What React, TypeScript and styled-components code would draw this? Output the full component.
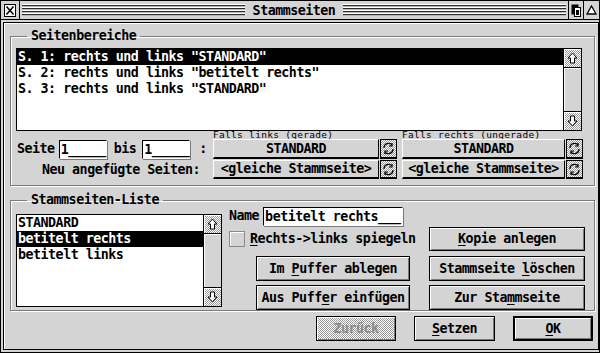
import React from 'react';
import styled, { createGlobalStyle } from 'styled-components';

const GlobalStyle = createGlobalStyle`
  html, body { margin: 0; padding: 0; background: #d4d4d4; }
  * { box-sizing: border-box; }
`;

const FONT = `"DejaVu Sans Mono", "Liberation Mono", monospace`;
const GRAY = '#d4d4d4';
const DITHER = `repeating-conic-gradient(#ffffff 0 25%, #9a9a9a 0 50%) 0 0 / 2px 2px`;

const Window = styled.div`
  width: 600px;
  height: 353px;
  border: 1px solid #000;
  display: flex;
  flex-direction: column;
  background: ${GRAY};
  font-family: ${FONT};
  font-weight: bold;
  font-size: 13.33px;
  letter-spacing: -0.5px;
  line-height: 16px;
  color: #000;
`;

const TitleBar = styled.div`
  height: 19px;
  flex: none;
  display: flex;
  border-bottom: 1px solid #000;
`;

const TitleBox = styled.div<{ $w: number }>`
  width: ${p => p.$w}px;
  flex: none;
  display: flex;
  align-items: center;
  justify-content: center;
  border-right: 1px solid #000;
  &:last-child { border-right: none; }
`;

const Stripes = styled.div`
  flex: 1;
  display: flex;
  align-items: center;
  justify-content: center;
  border-right: 1px solid #000;
  background: ${GRAY};
  position: relative;
  &::before {
    content: '';
    position: absolute;
    left: 2px; right: 2px; top: 3px; bottom: 3px;
    background: repeating-linear-gradient(to bottom, #ffffff 0 1px, #2a2a2a 1px 2px, #b8b8b8 2px 3px);
  }
`;

const TitleText = styled.span`
  position: relative;
  z-index: 1;
  background: ${GRAY};
  padding: 0 8px;
  line-height: 17px;
`;

const Body = styled.div`
  flex: 1;
  padding: 2px;
  display: flex;
`;

const Inner = styled.div`
  flex: 1;
  border: 1px solid #000;
  box-shadow: inset 1px 1px 0 #fff;
  padding: 5px 3px 0 6px;
  display: flex;
  flex-direction: column;
`;

const Group = styled.fieldset<{ $pb: number; $pt: number }>`
  margin: 0;
  border: 1px solid #7a7a7a;
  box-shadow: inset 1px 1px 0 #fff, 1px 1px 0 #fff;
  padding: ${p => p.$pt}px 9px ${p => p.$pb}px 5px;
  min-width: 0;
  & + & { margin-top: 6px; }
`;

const Legend = styled.legend`
  margin-left: 11px;
  padding: 0 4px;
  line-height: 16px;
`;

const ListBox = styled.div<{ $w: number; $h: number }>`
  width: ${p => p.$w}px;
  height: ${p => p.$h}px;
  border: 1px solid #000;
  background: #fff;
  display: flex;
  flex: none;
`;

const ListRows = styled.div`
  flex: 1;
  overflow: hidden;
`;

const ListRow = styled.div<{ $sel?: boolean }>`
  height: 16px;
  line-height: 16px;
  padding-left: 1px;
  white-space: pre;
  background: ${p => (p.$sel ? '#000' : 'transparent')};
  color: ${p => (p.$sel ? '#fff' : '#000')};
`;

const ScrollBar = styled.div`
  width: 18px;
  flex: none;
  border-left: 1px solid #000;
  display: flex;
  flex-direction: column;
  background: ${GRAY};
`;

const ScrollArrow = styled.div`
  height: 18px;
  flex: none;
  display: flex;
  align-items: center;
  justify-content: center;
  background: ${DITHER};
  box-shadow: inset 1px 1px 0 #fff;
`;

const ScrollTrack = styled.div`
  flex: 1;
  border-top: 1px solid #000;
  border-bottom: 1px solid #000;
  background: ${GRAY};
  box-shadow: inset 1px 1px 0 #fff;
`;

const PageGrid = styled.div`
  display: grid;
  grid-template-columns: 197px 184px 186px;
  grid-template-rows: 7px 20px 19px;
  row-gap: 1px;
`;

const Caption = styled.div<{ $ml?: number }>`
  font-size: 9.5px;
  font-weight: normal;
  letter-spacing: 0.3px;
  line-height: 7px;
  margin-left: ${p => p.$ml ?? 0}px;
  white-space: pre;
`;

const RangeRow = styled.div`
  display: flex;
  align-items: center;
  padding-left: 1px;
`;

const Field = styled.div<{ $w: number }>`
  width: ${p => p.$w}px;
  height: 19px;
  background: #fff;
  border: 1px solid #000;
  border-right-color: #fff;
  border-bottom-color: #fff;
  box-shadow: 1px 1px 0 #7a7a7a;
  line-height: 17px;
  padding-left: 1px;
  white-space: pre;
`;

const Label = styled.span<{ $ml?: number }>`
  margin-left: ${p => p.$ml ?? 0}px;
  white-space: pre;
`;

const RightLabel = styled.div`
  text-align: right;
  padding-right: 13px;
  line-height: 19px;
`;

const Popup = styled.div<{ $ml?: number }>`
  display: flex;
  height: 100%;
  margin-left: ${p => p.$ml ?? 0}px;
`;

const PopupButton = styled.div`
  flex: 1;
  display: flex;
  align-items: center;
  justify-content: center;
  border-top: 1px solid #fff;
  border-left: 1px solid #fff;
  border-bottom: 2px solid #000;
  border-right: 1px solid #000;
  background: ${GRAY};
  white-space: pre;
`;

const CycleBox = styled.div`
  width: 17px;
  margin-left: 1px;
  flex: none;
  display: flex;
  align-items: center;
  justify-content: center;
  border: 1px solid #000;
  border-bottom-width: 2px;
  background: ${DITHER};
`;

const MasterArea = styled.div`
  display: flex;
  align-items: flex-start;
`;

const RightPane = styled.div`
  margin-left: 7px;
  margin-top: -8px;
  width: 356px;
  display: flex;
  flex-direction: column;
`;

const Row = styled.div<{ $mt?: number; $h: number }>`
  display: flex;
  align-items: center;
  height: ${p => p.$h}px;
  margin-top: ${p => p.$mt ?? 0}px;
`;

const CheckBox = styled.div`
  width: 16px;
  height: 16px;
  border: 1px solid #8a8a8a;
  box-shadow: inset 1px 1px 0 #fff;
  background: ${GRAY};
  margin-right: 5px;
`;

const Button = styled.div<{ $w: number; $h?: number; $ml?: number; $default?: boolean; $disabled?: boolean }>`
  width: ${p => p.$w}px;
  height: ${p => p.$h ?? 25}px;
  margin-left: ${p => p.$ml ?? 0}px;
  flex: none;
  display: flex;
  align-items: center;
  justify-content: center;
  border: ${p => (p.$default ? 2 : 1)}px solid #000;
  box-shadow: inset 1px 1px 0 #fff, inset -1px -1px 0 #7a7a7a;
  background: ${p => (p.$disabled ? DITHER : GRAY)};
  color: ${p => (p.$disabled ? '#8a8a8a' : '#000')};
  white-space: pre;
`;

const Spacer = styled.div`
  flex: 1;
`;

const BottomRow = styled.div`
  display: flex;
  justify-content: flex-end;
  gap: 18px;
  margin-top: 5px;
  margin-right: 2px;
`;

const U = styled.span`
  text-decoration: underline;
  text-underline-offset: 2px;
  text-decoration-thickness: 1px;
`;

const UpArrow = ({ down }: { down?: boolean }) => (
  <svg width="11" height="12" viewBox="0 0 11 12" style={down ? { transform: 'rotate(180deg)' } : undefined}>
    <path d="M5.5 1 L10 6 H7.5 V11 H3.5 V6 H1 Z" fill="#fff" stroke="#000" strokeWidth="1" />
  </svg>
);

const CycleIcon = () => (
  <svg width="13" height="13" viewBox="0 0 13 13" fill="none" stroke="#000" strokeWidth="1.2">
    <path d="M2 6 A4.5 4.5 0 0 1 10 3" />
    <path d="M10 1 V4 H7" />
    <path d="M11 7 A4.5 4.5 0 0 1 3 10" />
    <path d="M3 12 V9 H6" />
  </svg>
);

const CloseIcon = () => (
  <svg width="12" height="13" viewBox="0 0 12 13">
    <rect x="0.5" y="0.5" width="11" height="12" fill="#fff" stroke="#000" />
    <path d="M2.5 2.5 L9.5 10.5 M9.5 2.5 L2.5 10.5" stroke="#000" strokeWidth="1.5" />
  </svg>
);

const IconifyIcon = () => (
  <svg width="10" height="13" viewBox="0 0 10 13">
    <rect x="0.5" y="0.5" width="7" height="10" fill="#000" />
    <rect x="3.5" y="3.5" width="6" height="9" fill="#fff" stroke="#000" />
    <rect x="5" y="6" width="3" height="5" fill="#000" />
  </svg>
);

const FullIcon = () => (
  <svg width="11" height="10" viewBox="0 0 11 10">
    <path d="M5.5 1 L10 9 H1 Z" fill="#fff" stroke="#000" strokeWidth="1.3" />
  </svg>
);

const pages = [
  'S. 1: rechts und links "STANDARD"',
  'S. 2: rechts und links "betitelt rechts"',
  'S. 3: rechts und links "STANDARD"',
];

const masters = ['STANDARD', 'betitelt rechts', 'betitelt links'];

const Scroll = () => (
  <ScrollBar>
    <ScrollArrow><UpArrow /></ScrollArrow>
    <ScrollTrack />
    <ScrollArrow><UpArrow down /></ScrollArrow>
  </ScrollBar>
);

const CyclePopup = ({ label, ml }: { label: string; ml?: number }) => (
  <Popup $ml={ml}>
    <PopupButton>{label}</PopupButton>
    <CycleBox><CycleIcon /></CycleBox>
  </Popup>
);

export default function App() {
  return (
    <>
      <GlobalStyle />
      <Window>
        <TitleBar>
          <TitleBox $w={19}><CloseIcon /></TitleBox>
          <Stripes><TitleText>Stammseiten</TitleText></Stripes>
          <TitleBox $w={15}><IconifyIcon /></TitleBox>
          <TitleBox $w={15}><FullIcon /></TitleBox>
        </TitleBar>
        <Body>
          <Inner>
            <Group $pt={4} $pb={6}>
              <Legend>Seitenbereiche</Legend>
              <ListBox $w={566} $h={83}>
                <ListRows>
                  {pages.map((p, i) => (
                    <ListRow key={p + i} $sel={i === 0}>{p}</ListRow>
                  ))}
                </ListRows>
                <Scroll />
              </ListBox>
              <PageGrid>
                <div />
                <Caption>Falls links (gerade)</Caption>
                <Caption $ml={5}>Falls rechts (ungerade)</Caption>
                <RangeRow>
                  <Label>Seite</Label>
                  <Label $ml={4}><Field $w={48}>1_____</Field></Label>
                  <Label $ml={7}>bis</Label>
                  <Label $ml={6}><Field $w={48}>1_____</Field></Label>
                  <Label $ml={9}>:</Label>
                </RangeRow>
                <CyclePopup label="STANDARD" />
                <CyclePopup label="STANDARD" ml={5} />
                <RightLabel>Neu angefügte Seiten:</RightLabel>
                <CyclePopup label="<gleiche Stammseite>" />
                <CyclePopup label="<gleiche Stammseite>" ml={5} />
              </PageGrid>
            </Group>
            <Group $pt={6} $pb={0}>
              <Legend>Stammseiten-Liste</Legend>
              <MasterArea>
                <ListBox $w={206} $h={93}>
                  <ListRows>
                    {masters.map((m, i) => (
                      <ListRow key={m} $sel={i === 1}>{m}</ListRow>
                    ))}
                  </ListRows>
                  <Scroll />
                </ListBox>
                <RightPane>
                  <Row $h={20}>
                    <Label>Name</Label>
                    <Label $ml={4}><Field $w={140}>betitelt rechts___</Field></Label>
                  </Row>
                  <Row $h={24} $mt={1}>
                    <CheckBox />
                    <span><U>R</U>echts-&gt;links spiegeln</span>
                    <Spacer />
                    <Button $w={156} $h={24}><U>K</U>opie anlegen</Button>
                  </Row>
                  <Row $h={25} $mt={5}>
                    <Button $w={154} $ml={27}>Im <U>P</U>uffer ablegen</Button>
                    <Spacer />
                    <Button $w={156}>Stammseite <U>l</U>öschen</Button>
                  </Row>
                  <Row $h={25} $mt={4}>
                    <Button $w={154} $ml={27}>Aus Puff<U>e</U>r einfügen</Button>
                    <Spacer />
                    <Button $w={156}>Zur Sta<U>m</U>mseite</Button>
                  </Row>
                </RightPane>
              </MasterArea>
            </Group>
            <BottomRow>
              <Button $w={80} $h={25} $disabled>Zurück</Button>
              <Button $w={81} $h={25}><U>S</U>etzen</Button>
              <Button $w={80} $h={25} $default><U>O</U>K</Button>
            </BottomRow>
          </Inner>
        </Body>
      </Window>
    </>
  );
}
